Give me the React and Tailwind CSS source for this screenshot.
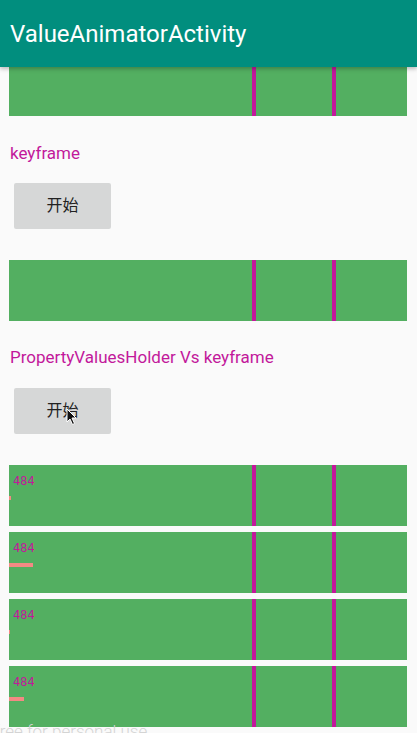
import React from 'react';

const roboto = { fontFamily: 'Roboto, "Noto Sans CJK SC", sans-serif' };

function Track({ className = '', children }) {
    return (
        <div className={`relative w-[398px] bg-[#53af61] ${className}`}>
            <div className="absolute top-0 bottom-0 left-[243px] w-[4px] bg-[#c2189b]" />
            <div className="absolute top-0 bottom-0 left-[323px] w-[4px] bg-[#c2189b]" />
            {children}
        </div>
    );
}

function ProgressTrack({ width }) {
    return (
        <Track className="h-[61px]">
            <span className="absolute left-[4px] top-[9px] font-['DejaVu_Sans_Mono',monospace] text-[12px] leading-[14px] text-[#c2189b]">484</span>
            <div className="absolute left-0 top-[31px] h-[4px] bg-[#f48a84]" style={{ width }} />
        </Track>
    );
}

function StartButton({ children }) {
    return (
        <div className="relative ml-[5px] flex h-[46px] w-[97px] items-center justify-center rounded-[2px] bg-[#d6d7d7] text-[16px] text-[#222]">
            开始
            {children}
        </div>
    );
}

export default function App() {
    return (
        <div className="relative h-[733px] w-full overflow-hidden bg-[#fafafa]" style={roboto}>
            <header className="relative z-10 flex h-[67px] items-center bg-[#018e7e] px-[10px] shadow-[0_2px_4px_rgba(0,0,0,0.25)]">
                <h1 className="text-[24px] font-normal text-white">ValueAnimatorActivity</h1>
            </header>

            <div className="flex flex-col pl-[9px]">
                <Track className="h-[49px]" />

                <p className="mt-[26px] pl-[1px] text-[17px] leading-[22px] text-[#c2189b]">keyframe</p>
                <div className="mt-[19px]">
                    <StartButton />
                </div>

                <Track className="mt-[31px] h-[61px]" />

                <p className="mt-[25px] pl-[1px] text-[17px] leading-[22px] text-[#c2189b]">PropertyValuesHolder Vs keyframe</p>
                <div className="mt-[20px]">
                    <StartButton>
                        <svg className="absolute left-[52px] top-[20px]" width="12" height="18" viewBox="0 0 12 18">
                            <path d="M1 1 L1 14 L4 11 L6.5 16.5 L8.5 15.5 L6 10 L10 10 Z" fill="#111" stroke="#fff" strokeWidth="1" />
                        </svg>
                    </StartButton>
                </div>

                <div className="mt-[31px] flex flex-col gap-[6px]">
                    <ProgressTrack width={2} />
                    <ProgressTrack width={24} />
                    <ProgressTrack width={1} />
                    <ProgressTrack width={15} />
                </div>
            </div>

            <span className="absolute bottom-[-7px] left-[-6px] whitespace-nowrap text-[17px] leading-none font-light text-[#d4d4d4]">free for personal use</span>
        </div>
    );
}
